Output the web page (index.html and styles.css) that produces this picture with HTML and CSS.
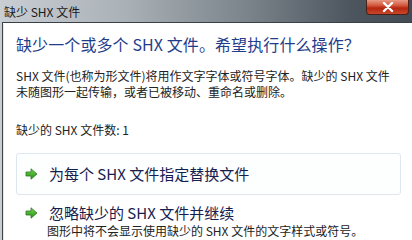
FILE: index.html
```html
<!DOCTYPE html>
<html>
<head>
<meta charset="utf-8">
<link rel="stylesheet" href="styles.css">
</head>
<body>
<div class="window">
  <div class="titlebar">
    <span class="title">缺少 SHX 文件</span>
    <div class="close"><svg width="12" height="10" viewBox="0 0 12 10"><path d="M2 1 L10 9 M10 1 L2 9" stroke="#fff" stroke-width="2.4" stroke-linecap="round"/></svg></div>
  </div>
  <div class="frame">
    <div class="content">
      <h1 class="main">缺少一个或多个 SHX 文件。希望执行什么操作？</h1>
      <p class="desc">SHX 文件(也称为形文件)将用作文字字体或符号字体。缺少的 SHX 文件<br>未随图形一起传输，或者已被移动、重命名或删除。</p>
      <p class="count">缺少的 SHX 文件数: 1</p>
      <div class="cmd boxed">
        <svg class="arrow" width="13" height="12" viewBox="0 0 13 12"><defs><linearGradient id="g1" x1="0" y1="0" x2="0" y2="1"><stop offset="0" stop-color="#7fd34a"/><stop offset="1" stop-color="#1f8f1c"/></linearGradient></defs><path d="M1 4 H6 V0.8 L12 6 L6 11.2 V8 H1 Z" fill="url(#g1)" stroke="#2a7a22" stroke-width="0.8" stroke-linejoin="round"/></svg>
        <div class="cmd-text">为每个 SHX 文件指定替换文件</div>
      </div>
      <div class="cmd">
        <svg class="arrow" width="13" height="12" viewBox="0 0 13 12"><defs><linearGradient id="g2" x1="0" y1="0" x2="0" y2="1"><stop offset="0" stop-color="#7fd34a"/><stop offset="1" stop-color="#1f8f1c"/></linearGradient></defs><path d="M1 4 H6 V0.8 L12 6 L6 11.2 V8 H1 Z" fill="url(#g2)" stroke="#2a7a22" stroke-width="0.8" stroke-linejoin="round"/></svg>
        <div class="cmd-body">
          <div class="cmd-text">忽略缺少的 SHX 文件并继续</div>
          <div class="cmd-sub">图形中将不会显示使用缺少的 SHX 文件的文字样式或符号。</div>
        </div>
      </div>
    </div>
  </div>
</div>
</body>
</html>
```

FILE: styles.css
```css
html, body {
  margin: 0;
  padding: 0;
  background: #fff;
}
body {
  width: 412px;
  height: 240px;
  overflow: hidden;
  font-family: "Noto Sans CJK SC", "Noto Sans", sans-serif;
}
.window {
  width: 412px;
  height: 240px;
  display: flex;
  flex-direction: column;
  background: linear-gradient(90deg, #c9ced3 0%, #aab1b7 30%, #7b848b 60%, #4d565e 85%, #424b53 100%);
}
.titlebar {
  height: 22px;
  display: flex;
  justify-content: space-between;
  align-items: flex-start;
  flex: none;
}
.title {
  font-size: 12px;
  line-height: 12px;
  color: #1a1a1a;
  padding: 6px 0 0 4px;
}
.close {
  width: 43px;
  height: 15px;
  margin-right: 3px;
  border: 1px solid #4a2018;
  border-top: none;
  border-radius: 0 0 4px 4px;
  background: linear-gradient(180deg, #e79a86 0%, #d2553a 40%, #b3260f 58%, #c8482a 100%);
  display: flex;
  align-items: center;
  justify-content: center;
  box-sizing: border-box;
}
.frame {
  flex: 1;
  margin-left: 2px;
  border-top: 1px solid #3a4047;
  border-left: 1px solid #3d4349;
  background: #fff;
  display: flex;
  flex-direction: column;
  padding-top: 1px;
}
.content {
  flex: 1;
  padding: 8px 0 0 12px;
  background: #fff;
  border-left: 1px solid #e6e8ea;
}
.main {
  margin: 0;
  font-weight: normal;
  font-size: 16px;
  line-height: 24px;
  color: #1f3d8a;
  letter-spacing: 0.1px;
}
.desc {
  margin: 12px 0 0 0;
  font-size: 12px;
  line-height: 16px;
  color: #222;
}
.count {
  margin: 22px 0 0 0;
  font-size: 12px;
  line-height: 16px;
  color: #222;
}
.cmd {
  display: flex;
  align-items: flex-start;
  width: 385px;
  box-sizing: border-box;
  padding: 0 0 0 8px;
  border: 1px solid transparent;
  border-radius: 3px;
}
.cmd.boxed {
  margin-top: 15px;
  height: 42px;
  align-items: center;
  border-color: #dfe7ee;
  background: #fdfefe;
}
.cmd + .cmd {
  margin-top: 7px;
}
.arrow {
  flex: none;
  margin-top: 0;
  margin-right: 11px;
}
.cmd:not(.boxed) .arrow {
  margin-top: 4px;
}
.cmd-text {
  font-size: 15px;
  line-height: 20px;
  color: #16204f;
}
.cmd-sub {
  font-size: 12px;
  line-height: 16px;
  color: #222;
  margin-left: -2px;
}
```
